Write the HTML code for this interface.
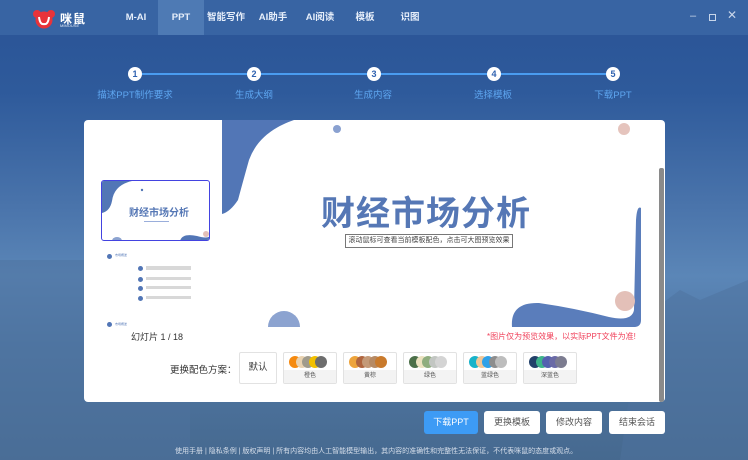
<!DOCTYPE html>
<html><head><meta charset="utf-8"><style>
*{margin:0;padding:0;box-sizing:border-box}
body{width:748px;height:460px;overflow:hidden;position:relative;font-family:"Liberation Sans","Noto Sans CJK SC",sans-serif;background:linear-gradient(180deg,#2a5396 0%,#2e5a9b 20%,#4a74ab 45%,#5b86b7 60%,#4f77a4 75%,#46698f 100%)}
.abs{position:absolute}
.hdr{left:0;top:0;width:748px;height:35px;background:#3864a3}
.nav{top:0;height:35px;line-height:35px;color:#e6eefa;font-size:9.5px;font-weight:bold;text-align:center}
.step{width:14px;height:14px;border-radius:50%;background:#fff;color:#2f62b0;font-size:9px;font-weight:bold;text-align:center;line-height:14px;top:67px}
.sl{top:87px;color:#5ea6f0;font-size:9.5px;text-align:center;width:100px}
.card{left:84px;top:120px;width:581px;height:282px;background:#fff;border-radius:4px;overflow:hidden}
.sw{top:352px;height:32px;border:1px solid #e2e2e2;border-radius:2px;background:#fff}
.sw .b{position:absolute;bottom:0;left:0;right:0;height:13px;background:#f3f3f3;font-size:6px;color:#555;text-align:center;line-height:13px}
.dot{position:absolute;top:3px;width:12px;height:12px;border-radius:50%}
.btn{top:411px;height:23px;border-radius:3px;background:#fff;color:#555;font-size:9px;text-align:center;line-height:23px}
</style></head><body>
<svg class="abs" style="left:0;top:260px" width="748" height="200"><path d="M0 0 L30 -20 L60 -40 L80 -60 L95 -48 L130 -100 L190 -10 L190 200 L0 200Z" fill="#4d729e" opacity=".5"/><path d="M640 60 L680 30 L700 40 L748 20 L748 200 L620 200Z" fill="#4d729e" opacity=".5"/></svg>
<div class="abs hdr"></div>
<svg class="abs" style="left:32px;top:9px" width="24" height="20"><circle cx="5" cy="5" r="4" fill="#e8333a"/><circle cx="19" cy="5" r="4" fill="#e8333a"/><circle cx="12" cy="11" r="8.5" fill="#e8333a"/><path d="M7 8 Q8 16 12 15 Q16 16 17 8" stroke="#fff" stroke-width="2" fill="none"/></svg>
<div class="abs" style="left:60px;top:10px;color:#fff;font-size:12px;font-weight:bold;letter-spacing:1px">咪鼠</div>
<div class="abs" style="left:60px;top:23px;color:#dfe8f5;font-size:4px">MIMOUSE</div>
<div class="abs nav" style="left:115px;width:42px">M-AI</div>
<div class="abs nav" style="left:158px;width:46px;background:#4e7ab4">PPT</div>
<div class="abs nav" style="left:205px;width:42px">智能写作</div>
<div class="abs nav" style="left:255px;width:36px">AI助手</div>
<div class="abs nav" style="left:300px;width:40px">AI阅读</div>
<div class="abs nav" style="left:350px;width:30px">模板</div>
<div class="abs nav" style="left:395px;width:30px">识图</div>
<div class="abs" style="left:690px;top:10px;color:#c8d6ea;font-size:11px">–</div>
<div class="abs" style="left:709px;top:14px;width:7px;height:7px;border:1px solid #c8d6ea"></div>
<div class="abs" style="left:727px;top:8px;color:#c8d6ea;font-size:12px">✕</div>
<div class="abs" style="left:135px;top:73px;width:479px;height:2px;background:#4a9cf0"></div>
<div class="abs step" style="left:128px">1</div><div class="abs step" style="left:247px">2</div><div class="abs step" style="left:367px">3</div><div class="abs step" style="left:487px">4</div><div class="abs step" style="left:606px">5</div>
<div class="abs sl" style="left:85px">描述PPT制作要求</div><div class="abs sl" style="left:204px">生成大纲</div><div class="abs sl" style="left:323px">生成内容</div><div class="abs sl" style="left:443px">选择模板</div><div class="abs sl" style="left:563px">下载PPT</div>
<div class="abs card">
<svg class="abs" style="left:0;top:0" width="581" height="282"><path d="M138 0 L210 0 Q175 12 165 40 Q158 65 154 80 Q146 92 138 94 Z" fill="#5276b6"/><circle cx="253" cy="9" r="4" fill="#8aa1d0"/><circle cx="540" cy="9" r="6" fill="#e5c4bd"/><path d="M428 207 Q426 182 455 183 Q490 188 525 197 Q548 202 550 190 L552 100 Q553 85 557 88 L557 200 Q557 207 550 207Z" fill="#5a7dbb"/><circle cx="541" cy="181" r="10" fill="#e3c0b8"/><path d="M184 207 A16 16 0 0 1 216 207Z" fill="#8ca3d0"/></svg>
<div class="abs" style="left:237px;top:66px;font-size:34px;font-weight:bold;color:#5577b5;letter-spacing:1px;white-space:nowrap">财经市场分析</div>
<div class="abs" style="left:261px;top:114px;width:168px;height:14px;border:1px solid #777;background:#fff;font-size:7px;color:#444;text-align:center;line-height:12px;white-space:nowrap;overflow:hidden">滚动鼠标可查看当前模板配色，点击可大图预览效果</div>
<div class="abs" style="left:17px;top:60px;width:109px;height:61px;border:1.5px solid #4343e0;border-radius:3px;background:#fff;overflow:hidden">
<svg class="abs" style="left:0;top:0" width="108" height="60"><path d="M0 0 L30 0 Q12 4 10 20 Q8 30 0 32Z" fill="#5276b6"/><path d="M78 60 Q80 52 95 55 Q105 58 108 55 L108 60Z" fill="#5276b6"/><circle cx="104" cy="53" r="3" fill="#e3c0b8"/><circle cx="40" cy="9" r="1.2" fill="#5276b6"/><path d="M10 60 A5 4 0 0 1 20 60Z" fill="#8ca3d0"/></svg>
<div class="abs" style="left:27px;top:23px;font-size:10px;font-weight:bold;color:#5577b5;white-space:nowrap">财经市场分析</div>
<div class="abs" style="left:42px;top:40px;width:25px;height:1px;background:#9aaedb"></div></div>
<div class="abs" style="left:23px;top:134px;width:5px;height:5px;border-radius:50%;background:#5276b6"></div><div class="abs" style="left:31px;top:133px;font-size:3px;color:#5276b6">市场概述</div>
<div class="abs" style="left:54px;top:146px;width:5px;height:5px;border-radius:50%;background:#5276b6"></div>
<div class="abs" style="left:54px;top:157px;width:5px;height:5px;border-radius:50%;background:#5276b6"></div>
<div class="abs" style="left:54px;top:166px;width:5px;height:5px;border-radius:50%;background:#5276b6"></div>
<div class="abs" style="left:54px;top:176px;width:5px;height:5px;border-radius:50%;background:#5276b6"></div>
<div class="abs" style="left:62px;top:146px;width:45px;height:4px;background:#d8d8d8"></div>
<div class="abs" style="left:62px;top:157px;width:45px;height:3px;background:#d8d8d8"></div>
<div class="abs" style="left:62px;top:166px;width:45px;height:3px;background:#d8d8d8"></div>
<div class="abs" style="left:62px;top:176px;width:45px;height:3px;background:#d8d8d8"></div>
<div class="abs" style="left:23px;top:202px;width:5px;height:5px;border-radius:50%;background:#5276b6"></div><div class="abs" style="left:31px;top:202px;font-size:3px;color:#5276b6">市场概述</div>
<div class="abs" style="left:47px;top:210px;font-size:9px;color:#333">幻灯片 1 / 18</div>
<div class="abs" style="left:403px;top:211px;font-size:8px;color:#f0405a;white-space:nowrap">*图片仅为预览效果，以实际PPT文件为准!</div>
<div class="abs" style="left:575px;top:48px;width:5px;height:234px;background:#8a8a8a;border-radius:2px"></div>
</div>
<div class="abs" style="left:170px;top:362px;font-size:9.5px;color:#333">更换配色方案：</div>
<div class="abs sw" style="left:239px;width:38px;font-size:9.5px;color:#444;text-align:center;line-height:30px">默认</div>
<div class="abs sw" style="left:283px;width:54px"><span class="dot" style="left:5px;background:#f58a0f"></span><span class="dot" style="left:12px;background:#e9d2b0"></span><span class="dot" style="left:18px;background:#a09b8c"></span><span class="dot" style="left:25px;background:#f2c000"></span><span class="dot" style="left:31px;background:#6d6d6d"></span><div class="b">橙色</div></div>
<div class="abs sw" style="left:343px;width:54px"><span class="dot" style="left:5px;background:#eda43c"></span><span class="dot" style="left:12px;background:#b0653f"></span><span class="dot" style="left:18px;background:#c49a78"></span><span class="dot" style="left:25px;background:#b68a64"></span><span class="dot" style="left:31px;background:#c97a2c"></span><div class="b">黄棕</div></div>
<div class="abs sw" style="left:403px;width:54px"><span class="dot" style="left:5px;background:#4c7049"></span><span class="dot" style="left:12px;background:#ece2c0"></span><span class="dot" style="left:18px;background:#8fad7e"></span><span class="dot" style="left:25px;background:#c2c6c2"></span><span class="dot" style="left:31px;background:#d4d4d4"></span><div class="b">绿色</div></div>
<div class="abs sw" style="left:463px;width:54px"><span class="dot" style="left:5px;background:#19b3c9"></span><span class="dot" style="left:12px;background:#f1c798"></span><span class="dot" style="left:18px;background:#2fa1e8"></span><span class="dot" style="left:25px;background:#8d8d8d"></span><span class="dot" style="left:31px;background:#bdbdbd"></span><div class="b">蓝绿色</div></div>
<div class="abs sw" style="left:523px;width:54px"><span class="dot" style="left:5px;background:#23416a"></span><span class="dot" style="left:12px;background:#3eb38b"></span><span class="dot" style="left:18px;background:#5460b0"></span><span class="dot" style="left:25px;background:#6a6aa6"></span><span class="dot" style="left:31px;background:#7c7c90"></span><div class="b">深蓝色</div></div>
<div class="abs btn" style="left:424px;width:54px;background:#3d9bf5;color:#fff">下载PPT</div>
<div class="abs btn" style="left:484px;width:56px">更换模板</div>
<div class="abs btn" style="left:546px;width:56px">修改内容</div>
<div class="abs btn" style="left:609px;width:56px">结束会话</div>
<div class="abs" style="left:175px;top:446px;font-size:7px;color:#d5deea;white-space:nowrap">使用手册 | 隐私条例 | 版权声明 | 所有内容均由人工智能模型输出，其内容的准确性和完整性无法保证，不代表咪鼠的态度或观点。</div>
</body></html>
